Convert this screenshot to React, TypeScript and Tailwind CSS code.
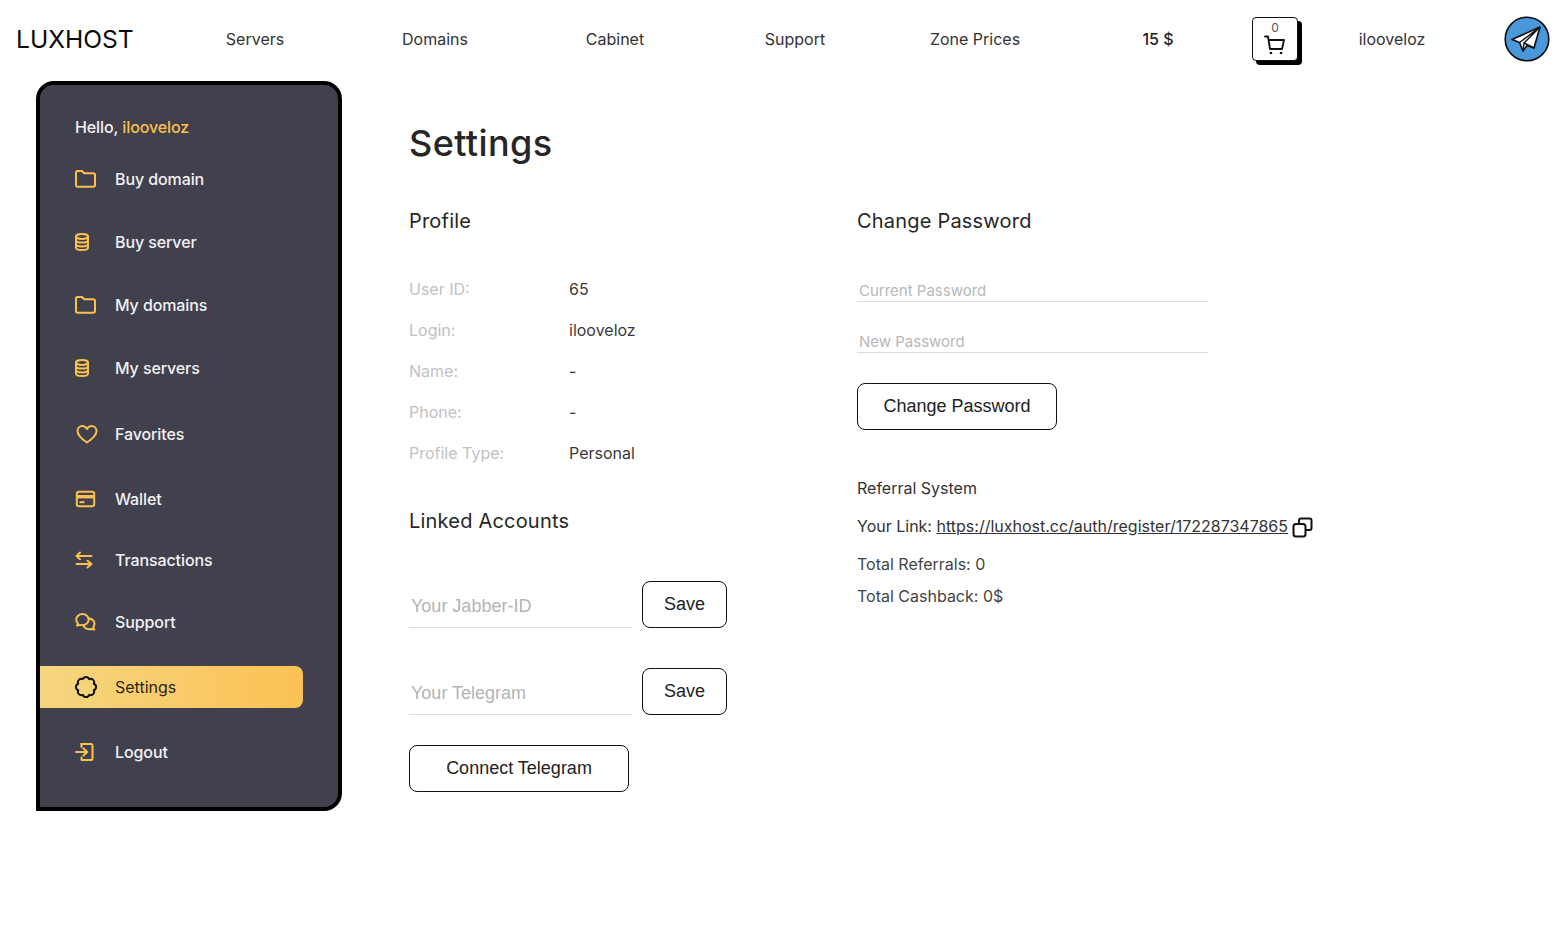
import React from "react";

const ic = { fill: "none", stroke: "currentColor", strokeWidth: 2, strokeLinecap: "round" as const, strokeLinejoin: "round" as const };

const Folder = () => (
  <svg width="22" height="18" viewBox="0 0 22 18" {...ic}>
    <path d="M1 3C1 2 1.6 1 2.6 1H7L9 3.2H18C19.1 3.2 20 4 20 5V15C20 16 19.1 16.8 18 16.8H2.8C1.8 16.8 1 16 1 15Z" />
  </svg>
);
const Db = () => (
  <svg width="22" height="18" viewBox="0 0 22 18" {...ic}>
    <ellipse cx="7" cy="3.5" rx="6" ry="2.4" />
    <path d="M1 3.5V14.5C1 15.9 3.7 17 7 17S13 15.9 13 14.5V3.5" />
    <path d="M1 7.2C1 8.6 3.7 9.6 7 9.6S13 8.6 13 7.2M1 11C1 12.4 3.7 13.4 7 13.4S13 12.4 13 11" />
  </svg>
);
const Heart = () => (
  <svg width="24" height="20" viewBox="0 0 24 20" {...ic}>
    <path d="M12 18.5C7.5 15.5 2.5 12 2.5 7C2.5 4 4.8 2 7.3 2C9.3 2 11 3 12 5C13 3 14.7 2 16.7 2C19.2 2 21.5 4 21.5 7C21.5 12 16.5 15.5 12 18.5Z" />
  </svg>
);
const Card = () => (
  <svg width="22" height="18" viewBox="0 0 22 18">
    <rect x="1.8" y="1.8" width="17.4" height="14.4" rx="2.2" fill="none" stroke="currentColor" strokeWidth="2" />
    <path d="M1 5H20V8.4H1Z" fill="currentColor" />
    <path d="M4.5 12.2H9.5" stroke="currentColor" strokeWidth="2" />
  </svg>
);
const Swap = () => (
  <svg width="22" height="18" viewBox="0 0 22 18" {...ic}>
    <path d="M5 1.5L1.5 5L5 8.2M1.5 5H16.5M12.5 9.8L16.5 13L12.5 16.5M16.5 13H1.5" />
  </svg>
);
const Chat = () => (
  <svg width="22" height="20" viewBox="0 0 22 20" {...ic}>
    <path d="M7.5 2C4 2 1.2 4.5 1.2 7.6C1.2 9.2 1.9 10.5 3 11.5L2 13.5L5.5 12.9C6.2 13.1 6.8 13.2 7.5 13.2C11 13.2 13.7 10.7 13.7 7.6C13.7 4.5 11 2 7.5 2Z" />
    <path d="M13.5 6.2C16.3 6.7 19.5 8.6 19.5 11.8C19.5 13.3 18.8 14.5 18.2 15.4L19.3 17.6L15.5 17C12.5 17.6 9.8 16.4 8.5 13.4" />
  </svg>
);

const lobes = 8;
const flower = (() => {
  const pts = Array.from({ length: lobes }, (_, k) => {
    const a = ((k + 0.5) * 2 * Math.PI) / lobes;
    return [12 + 8.5 * Math.cos(a), 12 + 8.5 * Math.sin(a)].map((v) => v.toFixed(2)).join(" ");
  });
  return `M${pts[0]}` + pts.slice(1).map((p) => ` A3.5 3.5 0 0 1 ${p}`).join("") + ` A3.5 3.5 0 0 1 ${pts[0]}Z`;
})();
const Gear = () => (
  <svg width="24" height="24" viewBox="1 0 24 24" fill="none" stroke="#111" strokeWidth="2" strokeLinejoin="round">
    <path d={flower} />
  </svg>
);
const Logout = () => (
  <svg width="22" height="20" viewBox="0 0 22 20" {...ic}>
    <path d="M6 2H16C16.8 2 17.5 2.7 17.5 3.5V16.5C17.5 17.3 16.8 18 16 18H6.5V15.5M6.5 5V2" />
    <path d="M1 10H12M8.5 6.5L12.3 10L8.5 13.5" />
  </svg>
);

const items = [
  { t: "Buy domain", i: <Folder />, h: "h-[63px]" },
  { t: "Buy server", i: <Db />, h: "h-[63px]" },
  { t: "My domains", i: <Folder />, h: "h-[63px]" },
  { t: "My servers", i: <Db />, h: "h-[63px]" },
  { t: "Favorites", i: <Heart />, h: "h-[69px]" },
  { t: "Wallet", i: <Card />, h: "h-[62px]" },
  { t: "Transactions", i: <Swap />, h: "h-[60px]" },
  { t: "Support", i: <Chat />, h: "h-[64px]" },
];

const Field = ({ label, value }: { label: string; value: string }) => (
  <div className="flex h-[41px] items-center text-[16px]">
    <span className="w-[160px] text-[#c2c2c2]">{label}</span>
    <span className="text-[#3a3a3a]">{value}</span>
  </div>
);

const Btn = ({ children, w }: { children: React.ReactNode; w: string }) => (
  <button className={`${w} h-[47px] shrink-0 rounded-[8px] border border-[#111] bg-white text-[18px] text-[#222] font-['Liberation_Sans',sans-serif]`}>
    {children}
  </button>
);

const Linked = ({ ph }: { ph: string }) => (
  <div className="flex items-start">
    <div className="h-[47px] w-[223px] border-b border-[#dcdcdc] pl-[2px] pt-[14px] text-[18px] leading-[22px] text-[#b4b4b4] font-['Liberation_Sans',sans-serif]">
      {ph}
    </div>
    <div className="ml-[10px]"><Btn w="w-[85px]">Save</Btn></div>
  </div>
);

export default function App() {
  return (
    <div className="h-[927px] overflow-hidden bg-white font-['Inter',sans-serif] text-[#2b2b2b]">
      <header className="flex h-[78px] items-center text-[16px] text-[#333]">
        <div className="w-[165px] pl-[16px] text-[24.6px] leading-none text-[#0a0a0a]">LUXHOST</div>
        {["Servers", "Domains", "Cabinet", "Support", "Zone Prices"].map((n) => (
          <div key={n} className="w-[180px] text-center">{n}</div>
        ))}
        <div className="w-[186px] text-center font-medium text-[#222]">15 $</div>
        <div className="ml-[1px] flex h-[44px] w-[46px] flex-col items-center rounded-[4px] border border-[#111] bg-white shadow-[4px_4px_0_#000]">
          <span className="mt-[3px] text-[12px] leading-[14px] text-[#555]">0</span>
          <svg width="22" height="20" viewBox="0 0 22 20" fill="none" stroke="#111" strokeWidth="1.8" strokeLinejoin="round" strokeLinecap="round">
            <path d="M1 1.5H4L6 14H18L20 5H5" />
            <circle cx="7" cy="18" r="1.3" fill="#111" stroke="none" />
            <circle cx="17" cy="18" r="1.3" fill="#111" stroke="none" />
          </svg>
        </div>
        <div className="w-[188px] text-center">ilooveloz</div>
        <svg className="ml-[18px]" width="46" height="46" viewBox="0 0 46 46">
          <circle cx="23" cy="23" r="21.8" fill="#4A98DC" stroke="#0d0d0d" strokeWidth="1.6" />
          <path d="M36 11L8 23.5L15.5 26.5L19 35L23 29.5L30 32Z" fill="#fff" stroke="#111" strokeWidth="1.7" strokeLinejoin="round" />
          <path d="M36 11L15.5 26.5M36 11L20 27L19 35M20 27L30 32" fill="none" stroke="#111" strokeWidth="1.5" strokeLinejoin="round" />
        </svg>
      </header>

      <div className="flex items-start">
        <aside className="ml-[36px] mt-[3px] h-[730px] w-[306px] shrink-0 rounded-[18px] rounded-bl-none border-4 border-[#000] bg-[#41414d] pt-[29px] text-[16px] font-medium tracking-[-0.1px] text-[#f2f2f6]">
          <div className="pl-[35px] leading-[26px]">
            Hello, <span className="text-[#FBC04E]">ilooveloz</span>
          </div>
          <div className="mt-[7px]">
            {items.map((it) => (
              <div key={it.t} className={`${it.h} flex items-center pl-[35px]`}>
                <span className="flex w-[40px] text-[#FBC04E]">{it.i}</span>
                <span>{it.t}</span>
              </div>
            ))}
          </div>
          <div className="mt-[12px] flex h-[42px] w-[263px] items-center rounded-r-[8px] bg-gradient-to-r from-[#f5d67f] to-[#fcc154] pl-[35px] font-normal tracking-normal text-[#2d2618]">
            <span className="flex w-[40px]"><Gear /></span>
            <span>Settings</span>
          </div>
          <div className="mt-[23px] flex h-[42px] items-center pl-[35px]">
            <span className="flex w-[40px] text-[#FBC04E]"><Logout /></span>
            <span>Logout</span>
          </div>
        </aside>

        <main className="ml-[67px] pt-[40px]">
          <h1 className="text-[36px] font-medium leading-[50px] tracking-[0.4px] text-[#262626]">Settings</h1>
          <div className="mt-[38px] flex">
            <section className="w-[448px]">
              <h2 className="text-[20px] font-normal leading-[30px] tracking-[0.2px] text-[#262626]">Profile</h2>
              <div className="mt-[32px]">
                <Field label="User ID:" value="65" />
                <Field label="Login:" value="ilooveloz" />
                <Field label="Name:" value="-" />
                <Field label="Phone:" value="-" />
                <Field label="Profile Type:" value="Personal" />
              </div>
              <h2 className="mt-[33px] text-[20px] font-normal leading-[30px] tracking-[0.2px] text-[#262626]">Linked Accounts</h2>
              <div className="mt-[45px] flex flex-col gap-[40px]">
                <Linked ph="Your Jabber-ID" />
                <Linked ph="Your Telegram" />
              </div>
              <div className="mt-[30px]"><Btn w="w-[220px]">Connect Telegram</Btn></div>
            </section>
            <section>
              <h2 className="text-[20px] font-normal leading-[30px] tracking-[0.2px] text-[#262626]">Change Password</h2>
              <div className="mt-[38px] h-[28px] w-[351px] border-b border-[#dcdcdc] pl-[2px] pt-[7px] text-[15px] leading-[20px] text-[#b8b8b8]">Current Password</div>
              <div className="mt-[23px] h-[28px] w-[351px] border-b border-[#dcdcdc] pl-[2px] pt-[7px] text-[15px] leading-[20px] text-[#b8b8b8]">New Password</div>
              <div className="mt-[30px]"><Btn w="w-[200px]">Change Password</Btn></div>
              <div className="mt-[46px] text-[16px] leading-[24px] text-[#333]">Referral System</div>
              <div className="mt-[14px] flex items-center text-[16px] leading-[24px] text-[#333]">
                <span>Your Link:&nbsp;</span>
                <span className="underline">https://luxhost.cc/auth/register/172287347865</span>
                <svg className="ml-[4px] mt-[2px]" width="21" height="21" viewBox="0 0 21 21" fill="none" stroke="#111" strokeWidth="2" strokeLinejoin="round">
                  <rect x="1.5" y="7" width="12" height="12.5" rx="2.5" />
                  <path d="M7 7V3.5C7 2.4 7.9 1.5 9 1.5H17.5C18.6 1.5 19.5 2.4 19.5 3.5V11C19.5 12.1 18.6 13 17.5 13H13.5" />
                </svg>
              </div>
              <div className="mt-[14px] text-[16px] leading-[24px] text-[#444]">Total Referrals: 0</div>
              <div className="mt-[8px] text-[16px] leading-[24px] text-[#444]">Total Cashback: 0$</div>
            </section>
          </div>
        </main>
      </div>
    </div>
  );
}
